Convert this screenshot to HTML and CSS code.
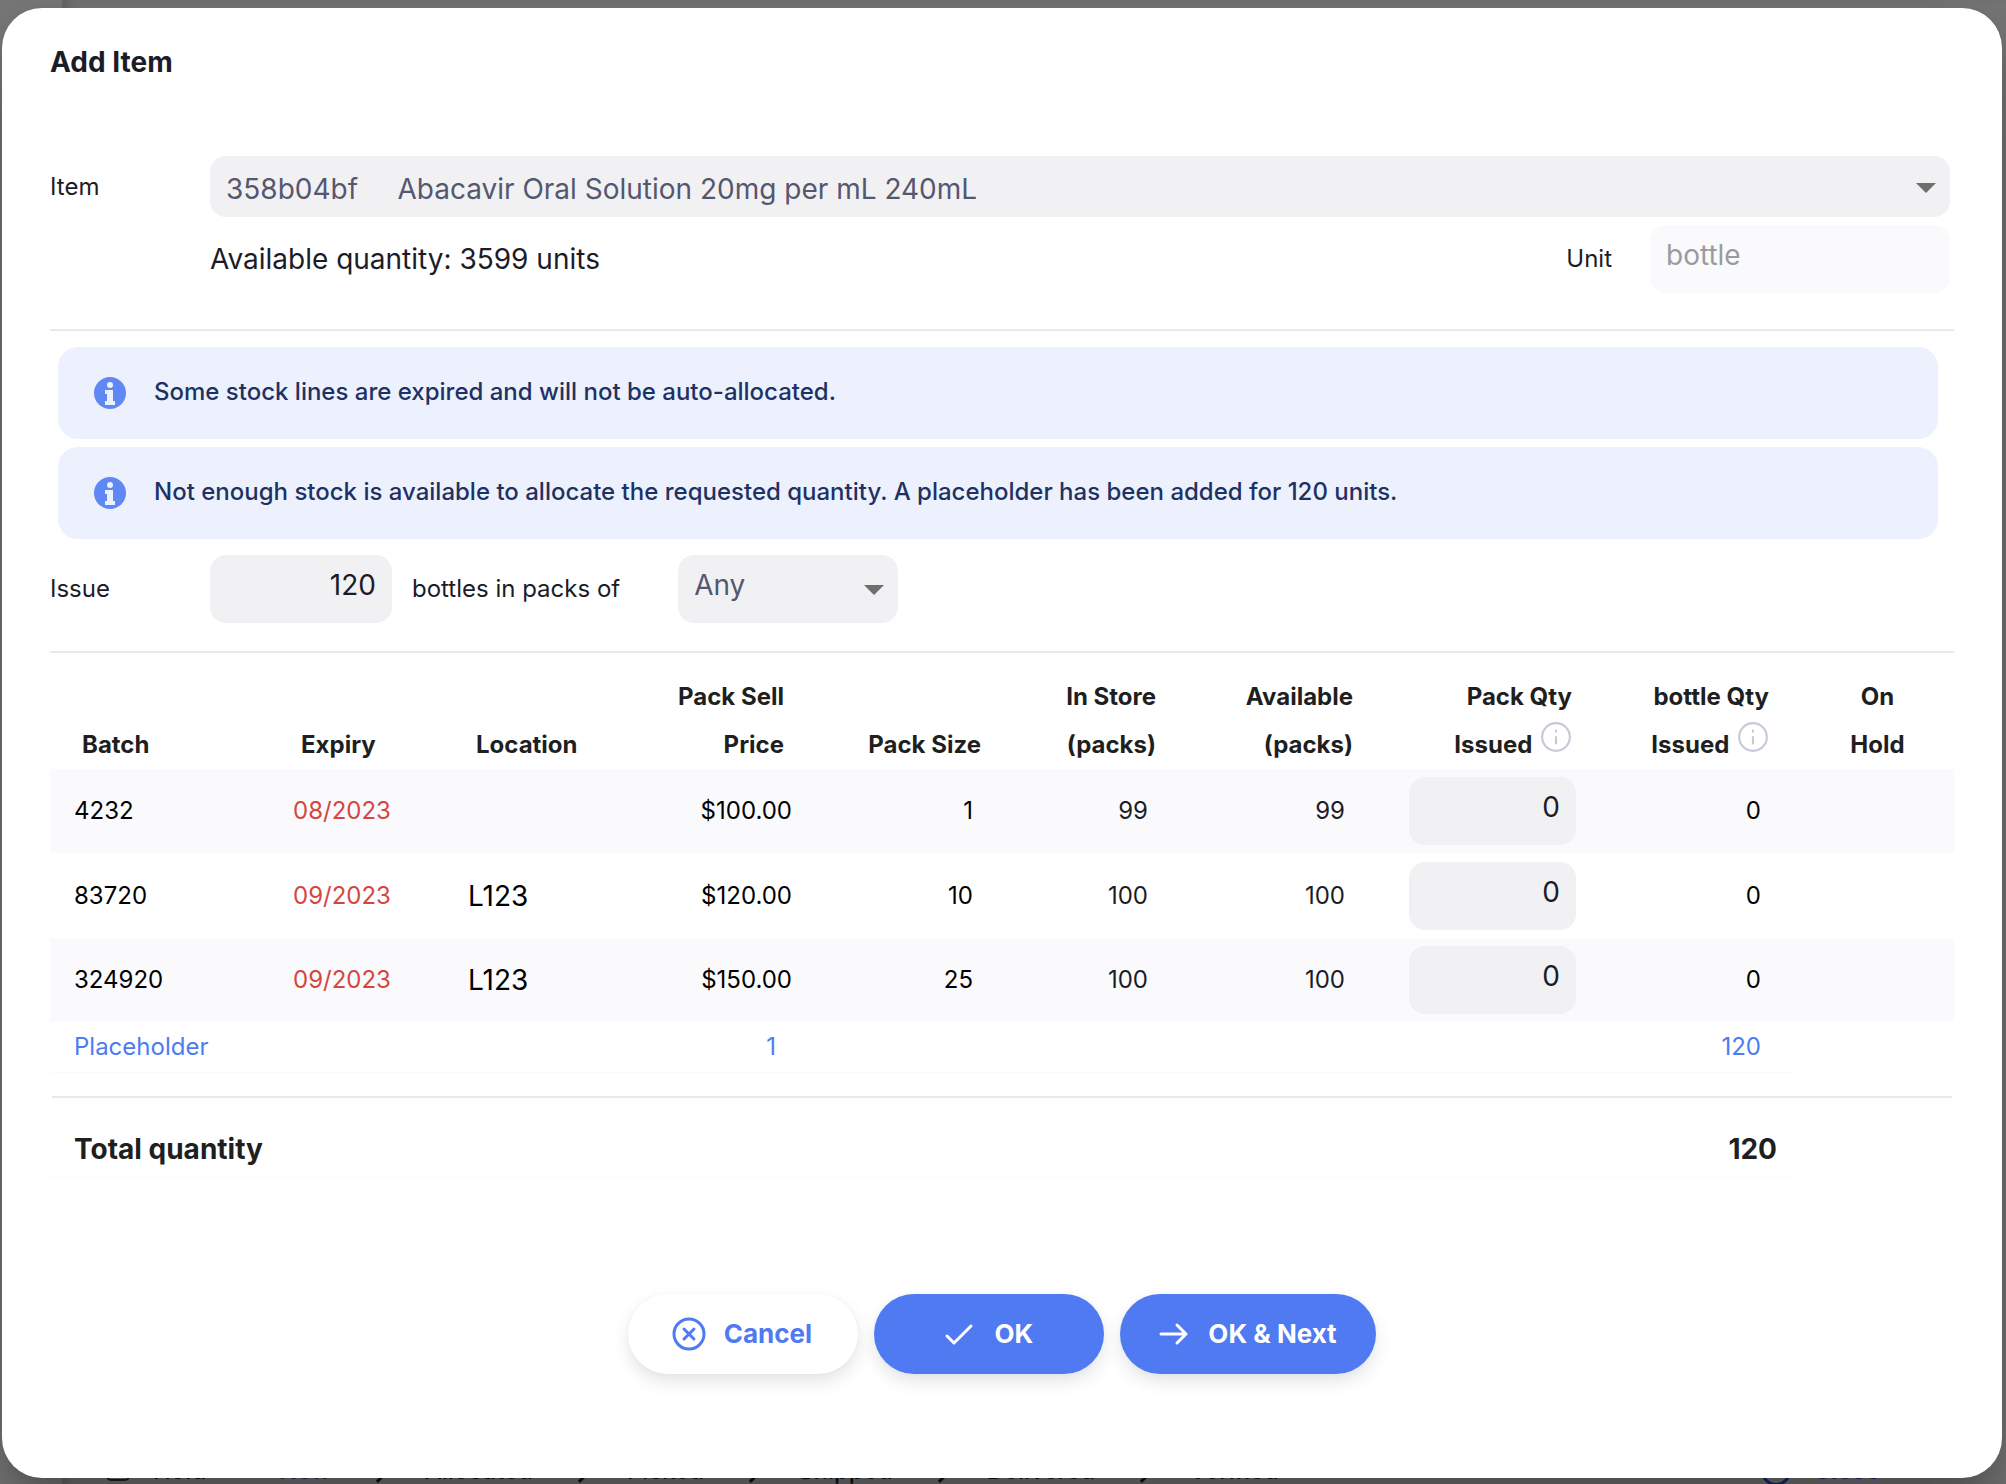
FILE: index.html
```html
<!DOCTYPE html>
<html lang="en">
<head>
<meta charset="utf-8">
<title>Add Item</title>
<link rel="stylesheet" href="styles.css">
</head>
<body>
<div class="app" aria-hidden="true">
  <div class="app-nav"></div>
  <div class="app-main">
    <div class="app-footer">
      <span class="hold"><span class="hold-box"></span>Hold</span>
      <span class="steps">
        <span class="step current">New</span><i class="chev"></i>
        <span class="step">Allocated</span><i class="chev"></i>
        <span class="step">Picked</span><i class="chev"></i>
        <span class="step">Shipped</span><i class="chev"></i>
        <span class="step">Delivered</span><i class="chev"></i>
        <span class="step">Verified</span>
      </span>
      <span class="close"><span class="close-ring"></span>Close</span>
    </div>
  </div>
</div>

<main class="modal" role="dialog" aria-labelledby="title">
  <h1 class="title" id="title">Add Item</h1>

  <div class="item-grid">
    <label class="label" for="item">Item</label>
    <div class="select-wrap">
      <select class="field item-select" id="item">
        <option>358b04bf&nbsp;&nbsp;&nbsp;&nbsp; Abacavir Oral Solution 20mg per mL 240mL</option>
      </select>
      <svg class="arrow" viewBox="0 0 20 10"><path d="M0 0h20L10 10z"/></svg>
    </div>
    <div class="availability">
      <span class="available">Available quantity: 3599 units</span>
      <label class="label" for="unit">Unit</label>
      <input class="field unit" id="unit" value="bottle" disabled>
    </div>
  </div>

  <hr class="rule">

  <div class="alerts">
    <div class="alert" role="status">
      <svg class="alert-icon" viewBox="0 0 32 32"><circle class="disc" cx="16" cy="16" r="16"/><circle cx="16" cy="8" r="3"/><path d="M12 13h7v11h2v4h-10v-4h2v-7h-2v-4z"/></svg>
      <span>Some stock lines are expired and will not be auto-allocated.</span>
    </div>
    <div class="alert" role="status">
      <svg class="alert-icon" viewBox="0 0 32 32"><circle class="disc" cx="16" cy="16" r="16"/><circle cx="16" cy="8" r="3"/><path d="M12 13h7v11h2v4h-10v-4h2v-7h-2v-4z"/></svg>
      <span>Not enough stock is available to allocate the requested quantity. A placeholder has been added for 120 units.</span>
    </div>
  </div>

  <div class="issue">
    <label class="label issue-label" for="issue">Issue</label>
    <input class="field issue-qty" id="issue" value="120">
    <label class="label packs-label" for="packs">bottles in packs of</label>
    <div class="select-wrap packs">
      <select class="field" id="packs"><option>Any</option></select>
      <svg class="arrow" viewBox="0 0 20 10"><path d="M0 0h20L10 10z"/></svg>
    </div>
  </div>

  <hr class="rule">

  <table class="stock">
    <colgroup>
      <col class="c-batch"><col class="c-expiry"><col class="c-location"><col class="c-price"><col class="c-size"><col class="c-store"><col class="c-avail"><col class="c-packs"><col class="c-units"><col class="c-hold">
    </colgroup>
    <thead>
      <tr>
        <th>Batch</th>
        <th>Expiry</th>
        <th>Location</th>
        <th class="num">Pack Sell<br>Price</th>
        <th class="num">Pack Size</th>
        <th class="num">In Store<br>(packs)</th>
        <th class="num">Available<br>(packs)</th>
        <th class="num">Pack Qty<br>Issued <svg class="hint" viewBox="0 0 30 30"><circle cx="15" cy="15" r="13"/><path d="M15 15v6M15 9v1"/></svg></th>
        <th class="num">bottle Qty<br>Issued <svg class="hint" viewBox="0 0 30 30"><circle cx="15" cy="15" r="13"/><path d="M15 15v6M15 9v1"/></svg></th>
        <th class="hold-col">On<br>Hold</th>
      </tr>
    </thead>
    <tbody>
      <tr class="line">
        <td>4232</td><td class="expired">08/2023</td><td class="location"></td><td class="num price">$100.00</td><td class="num">1</td><td class="num soft">99</td><td class="num soft">99</td>
        <td class="qty"><input class="field" aria-label="Pack quantity issued, batch 4232" value="0"></td><td class="num">0</td><td></td>
      </tr>
      <tr class="line">
        <td>83720</td><td class="expired">09/2023</td><td class="location">L123</td><td class="num price">$120.00</td><td class="num">10</td><td class="num soft">100</td><td class="num soft">100</td>
        <td class="qty"><input class="field" aria-label="Pack quantity issued, batch 83720" value="0"></td><td class="num">0</td><td></td>
      </tr>
      <tr class="line">
        <td>324920</td><td class="expired">09/2023</td><td class="location">L123</td><td class="num price">$150.00</td><td class="num">25</td><td class="num soft">100</td><td class="num soft">100</td>
        <td class="qty"><input class="field" aria-label="Pack quantity issued, batch 324920" value="0"></td><td class="num">0</td><td></td>
      </tr>
      <tr class="placeholder">
        <td colspan="3">Placeholder</td><td class="num">1</td><td colspan="4"></td><td class="num">120</td><td class="blank"></td>
      </tr>
    </tbody>
    <tfoot>
      <tr><td class="divider" colspan="10"><hr class="rule"></td></tr>
      <tr class="total">
        <th colspan="8" scope="row">Total quantity</th><td class="num">120</td><td class="blank"></td>
      </tr>
    </tfoot>
  </table>

  <div class="actions">
    <button class="btn outline" type="button"><svg viewBox="0 0 34 34"><circle cx="17" cy="17" r="15"/><path d="M12 12l10 10M22 12l-10 10"/></svg>Cancel</button>
    <button class="btn" type="button"><svg viewBox="0 0 34 34"><path d="M5 19l7 7L29 9"/></svg>OK</button>
    <button class="btn" type="button"><svg viewBox="0 0 34 34"><path d="M5 17h25M21 8l9 9-9 9"/></svg>OK &amp; Next</button>
  </div>
</main>
</body>
</html>
```

FILE: styles.css
```css
* { box-sizing: border-box; }

body {
  margin: 0;
  min-height: 100vh;
  padding: 8px 4px 6px 2px;
  display: flex;
  font-family: Inter, "Liberation Sans", sans-serif;
  font-size: 24px;
  line-height: 30px;
  color: #1c1c28;
  background: #7a7a7a;
}

/* Dimmed page behind the dialog */
.app {
  position: absolute;
  inset: 0;
  display: flex;
  overflow: hidden;
}
.app-nav { width: 62px; }
.app-main {
  flex: 1;
  display: flex;
  align-items: flex-end;
  box-shadow: inset 12px 0 12px -6px rgba(0, 0, 0, 0.16);
  background: #787878;
}
.app-footer {
  flex: 1;
  height: 28px;
  padding: 0 126px 0 44px;
  display: flex;
  overflow: hidden;
  font-weight: 500;
  color: #111;
}
.hold { display: flex; gap: 23px; width: 173px; }
.hold-box {
  width: 24px;
  height: 25px;
  border: 2px solid #222;
  border-radius: 5px;
}
.steps { display: flex; flex: 1; gap: 40px; }
.current { color: #152c70; }
.chev {
  width: 14px;
  height: 14px;
  margin-top: 10px;
  border: solid #111;
  border-width: 0 3px 3px 0;
  transform: rotate(-45deg);
}
.close { display: flex; gap: 22px; color: #152c70; font-weight: 700; }
.close-ring {
  width: 30px;
  height: 30px;
  border: 3px solid #152c70;
  border-radius: 50%;
}

/* Dialog */
.modal {
  position: relative;
  flex: 1;
  min-width: 0;
  padding: 36px 48px 34px;
  border-radius: 40px;
  background: #fff;
  box-shadow: 0 22px 30px -14px rgba(0, 0, 0, 0.2), 0 48px 76px 6px rgba(0, 0, 0, 0.14), 0 18px 92px 16px rgba(0, 0, 0, 0.12);
}
.title {
  margin: 0 0 76px;
  font-size: 28px;
  line-height: 36px;
  font-weight: 700;
}
.rule { margin: 0; border: 0; height: 2px; background: #e9e9ea; }

.field {
  display: block;
  width: 100%;
  height: 68px;
  padding: 0 16px 8px;
  border: 0;
  border-radius: 16px;
  font: inherit;
  font-size: 28px;
  line-height: 40px;
  color: #1c1c28;
  background: #f1f1f3;
  appearance: none;
  outline: 0;
}
select.field { color: #555770; }
.select-wrap { position: relative; }
.arrow {
  position: absolute;
  right: 14px;
  bottom: 28px;
  width: 20px;
  height: 10px;
  fill: #6e6e6e;
  pointer-events: none;
}

.item-grid {
  display: grid;
  grid-template-columns: 160px 1fr;
  row-gap: 8px;
  padding: 0 4px 36px 0;
  align-items: center;
}
.item-select { height: 61px; padding: 4px 16px 0; }
.item-grid .arrow { bottom: 24px; }
.availability {
  grid-column: 2;
  display: flex;
  align-items: center;
}
.available { flex: 1; font-size: 28px; }
.unit {
  width: 300px;
  margin-left: 38px;
  color: #9b9b9f;
  background: #fafafc;
}

.alerts {
  display: grid;
  gap: 8px;
  padding: 16px 16px 16px 8px;
}
.alert {
  min-height: 92px;
  padding: 0 36px;
  display: flex;
  align-items: center;
  gap: 28px;
  border-radius: 20px;
  font-weight: 500;
  color: #1f3163;
  background: #ecf1fd;
}
.alert span { padding-bottom: 2px; }
.alert-icon { width: 32px; height: 32px; flex: none; fill: #ecf1fd; }
.disc { fill: #5f88f4; }

.issue { display: flex; align-items: center; padding-bottom: 28px; }
.issue-label { width: 160px; }
.issue-qty { width: 182px; text-align: right; }
.packs-label { margin: 0 58px 0 20px; }
.packs { width: 220px; }

/* Stock lines */
.stock {
  width: 100%;
  table-layout: fixed;
  border-collapse: separate;
  border-spacing: 0;
}
.c-batch, .c-packs { width: 219px; }
.c-expiry, .c-location, .c-store { width: 175px; }
.c-price { width: 189px; }
.c-size, .c-avail, .c-units { width: 197px; }
.c-hold { width: 161px; }

th, td { padding: 0 0 0 24px; text-align: left; }
thead th {
  height: 116px;
  padding: 0 24px 0 32px;
  line-height: 48px;
  font-weight: 700;
  vertical-align: bottom;
  color: #1f1f1f;
  white-space: nowrap;
}
.num { padding-right: 32px; text-align: right; }
thead .num { padding-right: 24px; text-align: right; }
thead .hold-col { padding: 0 16px 0 24px; text-align: center; }
.hint {
  width: 32px;
  height: 32px;
  margin-left: 2px;
  fill: none;
  stroke: #c7c9d9;
  stroke-width: 2;
  stroke-linecap: round;
  vertical-align: 0;
}
.line td { height: 84px; color: #000; }
.line:nth-child(2) td { height: 85px; }
.line .soft { color: #1c1c28; }
.line .expired { color: #d5463f; }
.line .location { font-size: 28px; }
.line .price { padding-right: 16px; }
.line:nth-child(odd) td { background: #fafafc; }
.line .qty { padding: 0 20px 0 32px; }
.qty .field { text-align: right; }
.placeholder td {
  height: 51px;
  border-bottom: 1px solid #fafafc;
  color: #4d7bf3;
}
.divider { padding: 23px 2px 0; }
.total th, .total td {
  height: 80px;
  padding-top: 22px;
  border-bottom: 1px solid #fafafc;
  font-size: 28px;
  font-weight: 700;
  color: #1f1f1f;
}
.total .num { padding-right: 16px; }
.stock .blank { border: 0; }

.actions {
  display: flex;
  justify-content: center;
  gap: 16px;
  padding: 116px 0 68px;
}
.btn {
  min-width: 230px;
  height: 80px;
  padding: 0 39px 0 36px;
  display: flex;
  align-items: center;
  justify-content: center;
  gap: 18px;
  border: 0;
  border-radius: 40px;
  font: inherit;
  font-size: 26px;
  font-weight: 700;
  color: #fff;
  background: #4f7af2;
  box-shadow: 0 8px 16px rgba(96, 97, 112, 0.16), 0 0 4px rgba(40, 41, 61, 0.04);
}
.btn svg {
  width: 34px;
  height: 34px;
  fill: none;
  stroke: currentColor;
  stroke-width: 3;
  stroke-linecap: round;
  stroke-linejoin: round;
}
.outline { color: #4f7af2; background: #fff; }
```
